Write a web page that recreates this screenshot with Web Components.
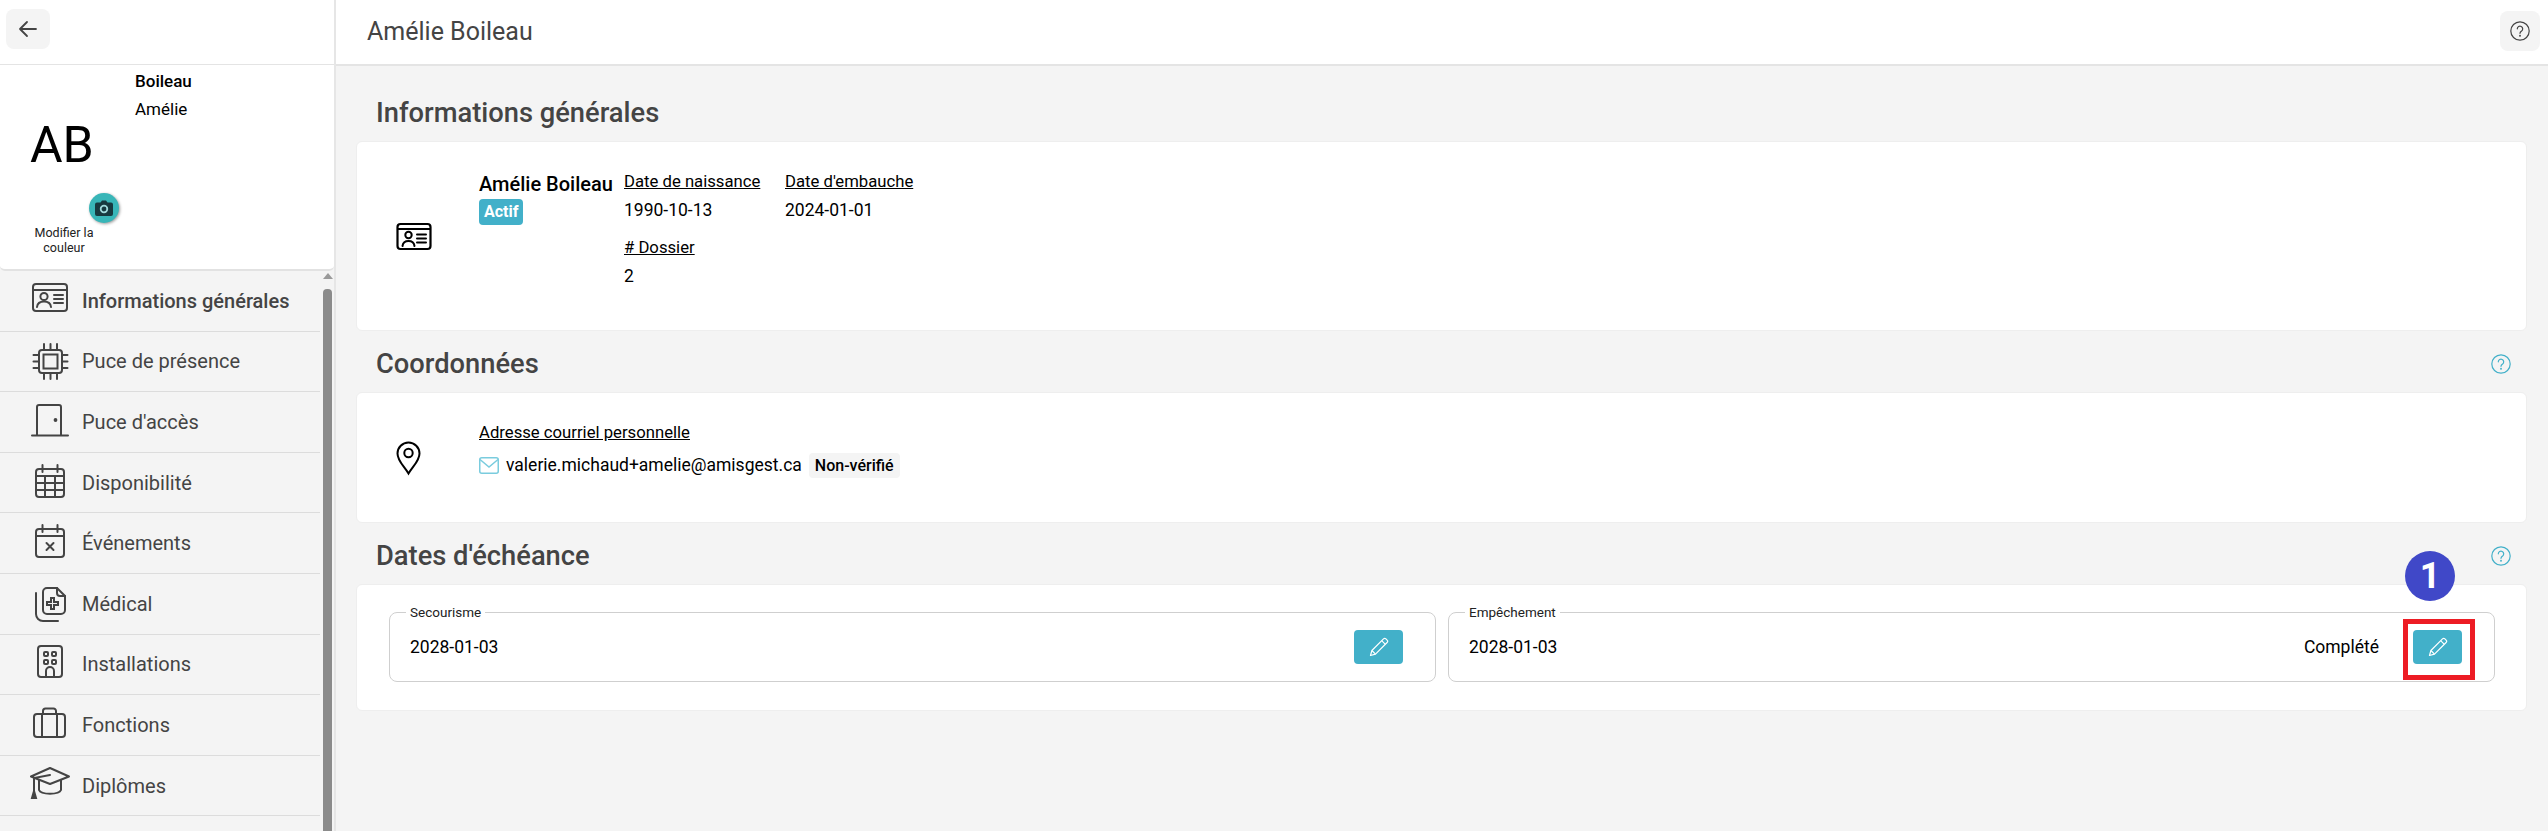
<!DOCTYPE html>
<html lang="fr">
<head>
<meta charset="utf-8">
<title>Amélie Boileau</title>
<style>
    html, body { margin: 0; height: 100%; }
    body { font-family: Roboto, "Liberation Sans", sans-serif; color: #000; background: #f4f4f4; overflow: hidden; position: relative; }
    #app { display: flex; height: 831px; }
</style>
</head>
<body>
<div id="app">
    <side-panel>
        <nav-item label="Informations générales" icon="card" active></nav-item>
        <nav-item label="Puce de présence" icon="chip"></nav-item>
        <nav-item label="Puce d'accès" icon="door"></nav-item>
        <nav-item label="Disponibilité" icon="calendar"></nav-item>
        <nav-item label="Événements" icon="event"></nav-item>
        <nav-item label="Médical" icon="medical"></nav-item>
        <nav-item label="Installations" icon="building"></nav-item>
        <nav-item label="Fonctions" icon="case"></nav-item>
        <nav-item label="Diplômes" icon="cap"></nav-item>
    </side-panel>
    <main-area title-text="Amélie Boileau">
        <info-section heading="Informations générales" style="--card-h:190px">
            <app-icon slot="icon" name="cardsmall" size="36" color="#000"></app-icon>
            <general-info></general-info>
        </info-section>
        <info-section heading="Coordonnées" help style="--card-h:131px">
            <app-icon slot="icon" name="pin" size="36" color="#000"></app-icon>
            <contact-info></contact-info>
        </info-section>
        <info-section heading="Dates d'échéance" help plain style="--card-h:127px">
            <due-dates></due-dates>
        </info-section>
    </main-area>
</div>
<step-marker number="1"></step-marker>

<script>
'use strict';

const ICONS = {
    card: `<rect x="3" y="3" width="34" height="27" rx="3"/><path d="M3 9h34"/><circle cx="14" cy="15.5" r="3.6"/><path d="M7 26c.5-4 3.500-5.500 7-5.500s6.500 1.500 7 5.500M24 14h9M24 18h9M24 22h9"/>`,
    cardsmall: `<rect x="1.500" y="6" width="33" height="25" rx="3" stroke-width="2.200"/><path d="M2 11h32M21 16.500h9M21 20.500h9M21 24.500h9" stroke-width="2"/><circle cx="12.500" cy="17" r="3.200" stroke-width="2"/><path d="M6.500 28c.5-3.500 2.800-5 6-5s5.500 1.500 6 5" stroke-width="2"/>`,
    chip: `<rect x="9" y="9" width="23" height="23" rx="3"/><rect x="13.500" y="13.500" width="14" height="14"/><path d="M14 3v6M20.500 3v6M27 3v6M14 32v6M20.500 32v6M27 32v6M3.500 14h5.500M3.500 20.500h5.500M3.500 27h5.500M32 14h5.500M32 20.500h5.500M32 27h5.500"/>`,
    door: `<path d="M7 33V5a2 2 0 0 1 2-2h20a2 2 0 0 1 2 2v28M2 33.500h36"/><circle cx="25.500" cy="18" r=".9" fill="#444"/>`,
    calendar: `<rect x="6" y="6" width="28" height="28" rx="3"/><path d="M12.500 2v7M27.500 2v7M6 13h28M6 20h28M6 27h28M15 13v21M25 13v21"/>`,
    event: `<rect x="6" y="6" width="28" height="28" rx="3"/><path d="M12.500 2v7M27.500 2v7M6 13h28M16.500 20l7 7M23.500 20l-7 7"/>`,
    medical: `<path d="M13 26V8a4 4 0 0 1 4-4h10l8 8v14a4 4 0 0 1-4 4H17a4 4 0 0 1-4-4z"/><path d="M27 4v5a3 3 0 0 0 3 3h5"/><path d="M6 9v21a7 7 0 0 0 7 7h15"/><path d="M21 14h3v4h4v3h-4v4h-3v-4h-4v-3h4z"/>`,
    building: `<rect x="8" y="2" width="24" height="31" rx="3"/><rect x="14" y="8" width="4" height="4" rx="1"/><rect x="22" y="8" width="4" height="4" rx="1"/><rect x="14" y="16" width="4" height="4" rx="1"/><rect x="22" y="16" width="4" height="4" rx="1"/><path d="M16 33v-6a4 4 0 0 1 8 0v6"/>`,
    case: `<rect x="4" y="9" width="31" height="23" rx="3"/><path d="M12 9v23M27 9v23M13 9V6a2.500 2.500 0 0 1 2.500-2.500h8A2.500 2.500 0 0 1 26 6v3"/>`,
    cap: `<path d="M20 2L1 10.500 20 18l19-7.500z" stroke-linejoin="round"/><path d="M9 14v10c2 5 20 5 22 0V14"/><path d="M20 9L4 12v13" /><path d="M4 25l-2 7h4z" fill="#444"/>`,
    pin: `<path d="M12.500 33.500C8 26 1.500 21 1.500 13.500a11 11 0 0 1 22 0C23.500 21 17 26 12.500 33.500z" stroke-width="2"/><circle cx="12.500" cy="13" r="4.200" stroke-width="2"/>`,
};

class AppIcon extends HTMLElement {
    connectedCallback()
    {
        const size = this.getAttribute('size') || 40;
        const view = this.getAttribute('name') === 'cardsmall' || this.getAttribute('name') === 'pin' ? 36 : 40;
        const stroke = this.getAttribute('color') || '#444';
        this.attachShadow({mode: 'open'}).innerHTML = `
        <style>
        :host { display: inline-flex; flex: none; }
        svg { display: block; fill: none; stroke: ${stroke}; stroke-width: 2; stroke-linecap: round; }
        </style>
        <svg width="${size}" height="${size}" viewBox="0 0 ${view} ${view}">${ICONS[this.getAttribute('name')]}</svg>`;
    }
}
customElements.define('app-icon', AppIcon);

class SidePanel extends HTMLElement {
    constructor()
    {
        super();
        this.attachShadow({mode: 'open'}).innerHTML = `
        <style>
        :host {
            display: flex;
            flex-direction: column;
            flex: none;
            box-sizing: border-box;
            width: 336px;
            height: 831px;
            border-right: 2px solid #e6e6e6;
            background: #f4f4f4;
            overflow: hidden;
        }
        .back-row {
            flex: none;
            box-sizing: border-box;
            height: 65px;
            padding: 9px 6px;
            background: #fff;
            border-bottom: 1px solid #e4e4e4;
        }
        .back {
            width: 44px;
            height: 40px;
            border-radius: 8px;
            background: #f4f4f4;
            display: flex;
            align-items: center;
            justify-content: center;
        }
        .profile {
            flex: none;
            box-sizing: border-box;
            height: 206px;
            background: #fff;
            border-bottom: 2px solid #e2e2e2;
            border-radius: 0 0 5px 5px;
            display: grid;
            grid-template-columns: 135px 1fr;
        }
        .avatar { position: relative; text-align: center; }
        .initials { position: absolute; left: 30px; top: 45px; font-size: 50px; line-height: 70px; }
        .edit { position: absolute; left: 22px; top: 160px; width: 84px; font-size: 12.500px; line-height: 15px; color: #222; }
        .camera {
            position: absolute;
            left: 89px;
            top: 128px;
            width: 30px;
            height: 30px;
            border-radius: 50%;
            background: #38b6b8;
            box-shadow: 1px 1px 3px rgba(0, 0, 0, .4);
            display: flex;
            align-items: center;
            justify-content: center;
        }
        .names { font-size: 17px; line-height: 27px; padding-top: 3px; }
        .names b { display: block; font-weight: 500; margin-bottom: 1px; }
        .menu { flex: 1; display: flex; min-height: 0; }
        .items { width: 320px; flex: none; }
        .track { width: 9px; margin-left: 3px; position: relative; }
        .thumb { position: absolute; left: 0; right: 0; top: 18px; bottom: 0; background: #8b8b8b; border-radius: 4px 4px 0 0; }
        .up { position: absolute; left: 0; top: 2px; border: 5px solid transparent; border-top: 0; border-bottom: 6px solid #9a9a9a; }
        </style>
        <div class="back-row">
            <div class="back">
                <svg width="20" height="20" viewBox="0 0 20 20" fill="none" stroke="#444" stroke-width="1.800" stroke-linecap="round" stroke-linejoin="round"><path d="M18 10H2M9 3l-7 7 7 7"/></svg>
            </div>
        </div>
        <div class="profile">
            <div class="avatar">
                <div class="initials">AB</div>
                <div class="camera">
                    <svg width="18" height="16" viewBox="0 0 18 16"><path fill="#17393f" d="M2 2.500h3.500L7 .5h4l1.500 2H16a2 2 0 0 1 2 2V14a2 2 0 0 1-2 2H2a2 2 0 0 1-2-2V4.500a2 2 0 0 1 2-2z"/><circle cx="9" cy="9" r="3.300" fill="none" stroke="#9fd8da" stroke-width="1.800"/></svg>
                </div>
                <div class="edit">Modifier la couleur</div>
            </div>
            <div class="names"><b>Boileau</b>Amélie</div>
        </div>
        <div class="menu">
            <div class="items"><slot></slot></div>
            <div class="track"><div class="up"></div><div class="thumb"></div></div>
        </div>`;
    }
}
customElements.define('side-panel', SidePanel);

class NavItem extends HTMLElement {
    connectedCallback()
    {
        const active = this.hasAttribute('active');
        this.attachShadow({mode: 'open'}).innerHTML = `
        <style>
        :host {
            display: flex;
            align-items: center;
            gap: 12px;
            box-sizing: border-box;
            height: 60.6px;
            padding-left: 30px;
            border-bottom: 1px solid #dcdcdc;
            font-size: 20px;
            font-weight: ${active ? 500 : 400};
            color: #444;
        }
        </style>
        <app-icon name="${this.getAttribute('icon')}"></app-icon>
        <span>${this.getAttribute('label')}</span>`;
    }
}
customElements.define('nav-item', NavItem);

const HELP_SVG = (color) => `<svg width="20" height="20" viewBox="0 0 20 20" fill="none" stroke="${color}" stroke-width="1.200" stroke-linecap="round"><circle cx="10" cy="10" r="9.200"/><path d="M7.300 7.800a2.700 2.700 0 1 1 4.300 2.200c-1 .7-1.600 1.200-1.600 2.300"/><circle cx="10" cy="14.800" r=".4"/></svg>`;

class MainArea extends HTMLElement {
    connectedCallback()
    {
        this.attachShadow({mode: 'open'}).innerHTML = `
        <style>
        :host { display: flex; flex-direction: column; flex: 1; min-width: 0; background: #f4f4f4; }
        .top {
            flex: none;
            box-sizing: border-box;
            height: 66px;
            padding-left: 31px;
            padding-right: 8px;
            padding-bottom: 2px;
            background: #fff;
            border-bottom: 2px solid #e4e4e4;
            display: flex;
            align-items: center;
            justify-content: space-between;
            font-size: 25px;
            color: #444;
        }
        .help {
            width: 40px;
            height: 40px;
            border-radius: 8px;
            background: #f4f4f4;
            display: flex;
            align-items: center;
            justify-content: center;
        }
        .content { padding: 19px 21px 0 20px; display: flex; flex-direction: column; gap: 5px; }
        </style>
        <div class="top">
            <span>${this.getAttribute('title-text')}</span>
            <div class="help">${HELP_SVG('#444')}</div>
        </div>
        <div class="content"><slot></slot></div>`;
    }
}
customElements.define('main-area', MainArea);

class InfoSection extends HTMLElement {
    connectedCallback()
    {
        const help = this.hasAttribute('help') ? HELP_SVG('#42b0c9') : '';
        this.attachShadow({mode: 'open'}).innerHTML = `
        <style>
        :host { display: block; }
        .head {
            height: 56px;
            padding: 0 16px 0 20px;
            display: flex;
            align-items: center;
            justify-content: space-between;
            font-size: 27.300px;
            font-weight: 500;
            color: #444;
        }
        .card {
            box-sizing: border-box;
            height: var(--card-h);
            background: #fff;
            border: 1px solid #eeeeee;
            border-radius: 6px;
            display: flex;
        }
        .side { flex: none; width: 122px; padding-left: 39px; box-sizing: border-box; display: flex; align-items: center; }
        .body { flex: 1; min-width: 0; }
        :host([plain]) .side { display: none; }
        svg { display: block; }
        </style>
        <div class="head"><span>${this.getAttribute('heading')}</span>${help}</div>
        <div class="card">
            <div class="side"><slot name="icon"></slot></div>
            <div class="body"><slot></slot></div>
        </div>`;
    }
}
customElements.define('info-section', InfoSection);

class GeneralInfo extends HTMLElement {
    constructor()
    {
        super();
        this.attachShadow({mode: 'open'}).innerHTML = `
        <style>
        :host {
            display: grid;
            grid-template-columns: 145px 161px 161px;
            padding-top: 26px;
            font-size: 17.500px;
        }
        .who { grid-row: span 2; }
        .name { font-size: 20px; font-weight: 500; line-height: 30px; margin-top: 1px; }
        .tag {
            display: inline-block;
            box-sizing: border-box;
            height: 26px;
            padding: 0 5px;
            border-radius: 4px;
            background: #42b0c9;
            color: #fff;
            font-size: 16px;
            font-weight: 700;
            line-height: 26px;
            vertical-align: top;
        }
        .field { height: 66px; }
        u { font-size: 16.700px; }
        u, .val { display: block; line-height: 28px; }
        </style>
        <div class="who"><div class="name">Amélie Boileau</div><span class="tag">Actif</span></div>
        <div class="field"><u>Date de naissance</u><span class="val">1990-10-13</span></div>
        <div class="field"><u>Date d'embauche</u><span class="val">2024-01-01</span></div>
        <div class="field"><u># Dossier</u><span class="val">2</span></div>`;
    }
}
customElements.define('general-info', GeneralInfo);

class ContactInfo extends HTMLElement {
    constructor()
    {
        super();
        this.attachShadow({mode: 'open'}).innerHTML = `
        <style>
        :host { display: block; padding-top: 26px; font-size: 17.500px; }
        u { display: block; font-size: 16.700px; line-height: 28px; margin-bottom: 4px; }
        .row { display: flex; align-items: center; height: 28px; }
        svg { display: block; margin-right: 7px; }
        .tag { height: 25px; line-height: 25px; padding: 0 6px; margin-left: 7px; border-radius: 4px; background: #f4f4f4; font-size: 16px; font-weight: 500; }
        </style>
        <u>Adresse courriel personnelle</u>
        <div class="row">
            <svg width="20" height="17" viewBox="0 0 20 17" fill="none" stroke="#7accde" stroke-width="1.500"><rect x=".75" y=".75" width="18.500" height="15.500" rx="2"/><path d="M1 2.500l9 7.500 9-7.500"/></svg>
            <span>valerie.michaud+amelie@amisgest.ca</span>
            <span class="tag">Non-vérifié</span>
        </div>`;
    }
}
customElements.define('contact-info', ContactInfo);

class DateField extends HTMLElement {
    connectedCallback()
    {
        const status = this.getAttribute('status');
        this.attachShadow({mode: 'open'}).innerHTML = `
        <style>
        :host { display: block; }
        fieldset {
            margin: 0;
            padding: 0 32px 7px 20px;
            border: 1px solid #cfcfcf;
            border-radius: 8px;
        }
        legend { margin-left: -4px; padding: 0 4px; font-size: 13.500px; line-height: 16px; color: #222; }
        .row { display: flex; align-items: center; height: 54px; font-size: 17.500px; }
        .date { flex: 1; }
        .status { margin-right: 34px; }
        .edit {
            width: 49px;
            height: 34px;
            border-radius: 4px;
            background: #42b0c9;
            display: flex;
            align-items: center;
            justify-content: center;
        }
        svg { display: block; }
        </style>
        <fieldset>
            <legend>${this.getAttribute('label')}</legend>
            <div class="row">
                <span class="date">${this.getAttribute('date')}</span>
                ${status ? `<span class="status">${status}</span>` : ''}
                <div class="edit">
                    <svg width="20" height="20" viewBox="0 0 20 20" fill="none" stroke="#fff" stroke-width="1.200" stroke-linejoin="round"><path d="M1.500 18.500l1.400-5L14.500 1.900a1.700 1.700 0 0 1 2.400 0l1.200 1.200a1.700 1.700 0 0 1 0 2.400L6.500 17.100z"/><path d="M12.700 3.700l3.600 3.600M2.900 13.500l3.600 3.600"/></svg>
                </div>
            </div>
        </fieldset>`;
    }
}
customElements.define('date-field', DateField);

class DueDates extends HTMLElement {
    constructor()
    {
        super();
        this.attachShadow({mode: 'open'}).innerHTML = `
        <style>
        :host { display: grid; grid-template-columns: 1fr 1fr; gap: 12px; padding: 19px 31px 0 32px; }
        </style>
        <date-field label="Secourisme" date="2028-01-03"></date-field>
        <date-field label="Empêchement" date="2028-01-03" status="Complété"></date-field>`;
    }
}
customElements.define('due-dates', DueDates);

// Tutorial annotation painted over the screenshot: numbered dot and red frame
class StepMarker extends HTMLElement {
    connectedCallback()
    {
        this.attachShadow({mode: 'open'}).innerHTML = `
        <style>
        :host { display: block; position: absolute; left: 0; top: 0; }
        .dot {
            position: absolute;
            left: 2405px;
            top: 551px;
            width: 50px;
            height: 50px;
            border-radius: 50%;
            background: #4048c8;
            color: #fff;
            font: 700 36px/50px Roboto, "Liberation Sans", sans-serif;
            text-align: center;
        }
        .frame {
            position: absolute;
            left: 2403px;
            top: 619px;
            box-sizing: border-box;
            width: 72px;
            height: 61px;
            border: 5px solid #ed1c24;
        }
        </style>
        <div class="dot">${this.getAttribute('number')}</div>
        <div class="frame"></div>`;
    }
}
customElements.define('step-marker', StepMarker);
</script>
</body>
</html>
